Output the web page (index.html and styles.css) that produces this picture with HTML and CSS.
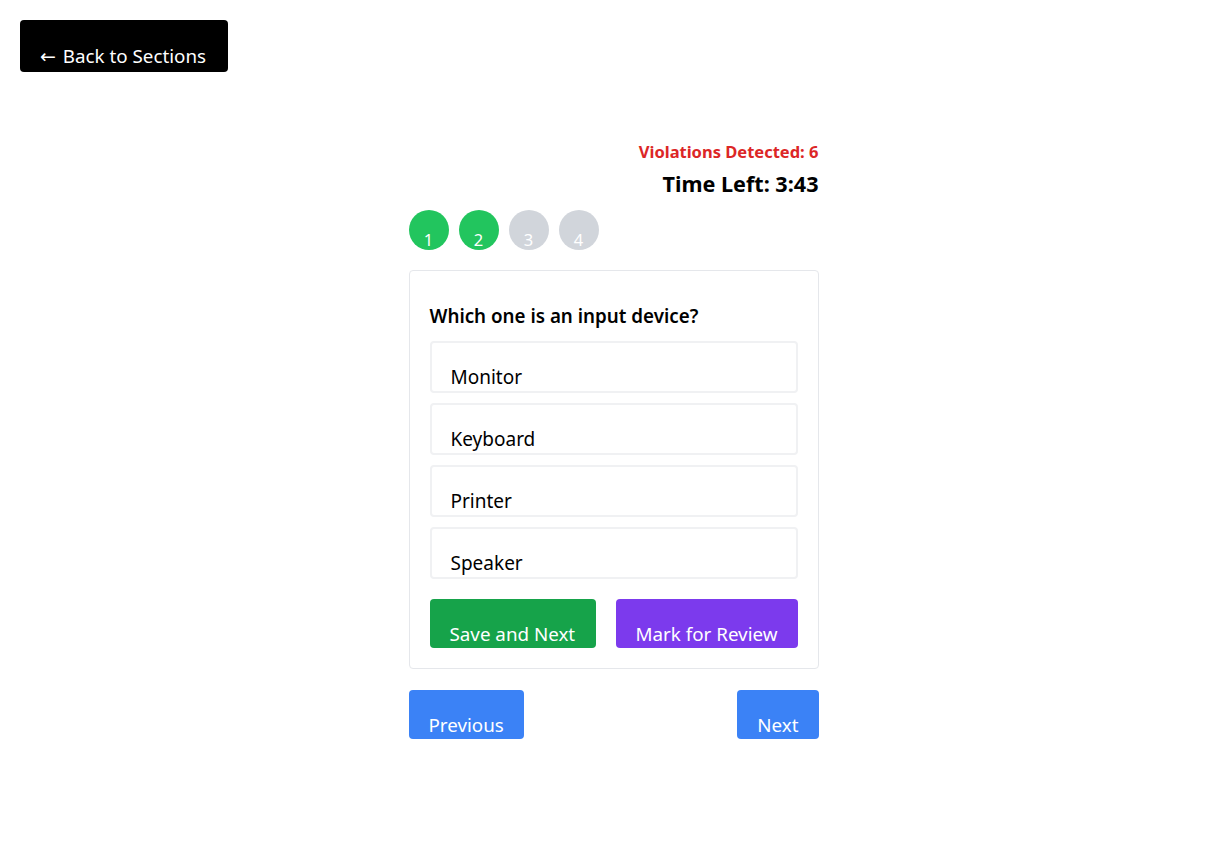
FILE: index.html
```html
<!DOCTYPE html>
<html>
<head>
<meta charset="utf-8">
<link rel="stylesheet" href="styles.css">
</head>
<body>
<div class="page">
  <button class="back-btn"><span class="arrow">←</span> Back to Sections</button>
  <main class="quiz">
    <div class="status">
      <div class="violations">Violations Detected: 6</div>
      <div class="timer">Time Left: 3:43</div>
    </div>
    <div class="steps">
      <span class="step done">1</span>
      <span class="step done">2</span>
      <span class="step">3</span>
      <span class="step">4</span>
    </div>
    <section class="card">
      <h2 class="question">Which one is an input device?</h2>
      <div class="options">
        <div class="option">Monitor</div>
        <div class="option">Keyboard</div>
        <div class="option">Printer</div>
        <div class="option">Speaker</div>
      </div>
      <div class="actions">
        <button class="btn btn-green">Save and Next</button>
        <button class="btn btn-purple">Mark for Review</button>
      </div>
    </section>
    <div class="nav">
      <button class="btn btn-blue prev">Previous</button>
      <button class="btn btn-blue next">Next</button>
    </div>
  </main>
</div>
</body>
</html>
```

FILE: styles.css
```css
* { box-sizing: border-box; }
html, body { margin: 0; padding: 0; background: #fff; }
body {
  font-family: "Noto Sans", "Open Sans", sans-serif;
  color: #000;
}
.page {
  padding: 20px;
}
button {
  font-family: inherit;
  border: none;
  cursor: pointer;
}
.back-btn {
  display: flex;
  align-items: flex-end;
  height: 52px;
  width: 208px;
  padding: 0 0 4px 20px;
  background: #000;
  color: #fff;
  font-size: 18.8px;
  border-radius: 4px;
  line-height: 24px;
  white-space: pre;
}
.arrow {
  font-family: "DejaVu Sans", sans-serif;
  font-size: 19px;
  margin-right: 2px;
}
.quiz {
  width: 410px;
  margin: 68px auto 0 auto;
}
.status {
  text-align: right;
}
.violations {
  color: #dc2626;
  font-weight: 700;
  font-size: 16.5px;
  line-height: 24px;
}
.timer {
  font-weight: 700;
  font-size: 21.6px;
  line-height: 28px;
  margin-top: 6px;
}
.steps {
  display: flex;
  gap: 10px;
  margin-top: 12px;
}
.step {
  width: 40px;
  height: 40px;
  border-radius: 50%;
  background: #d1d5db;
  color: #fff;
  font-size: 16.5px;
  display: flex;
  align-items: flex-end;
  justify-content: center;
  line-height: 20px;
}
.step.done { background: #22c55e; }
.card {
  margin-top: 20px;
  border: 1px solid #e5e7eb;
  border-radius: 4px;
  padding: 20px;
}
.question {
  margin: 12px 0 0 0;
  font-size: 18.8px;
  font-weight: 600;
  line-height: 26px;
}
.options {
  display: flex;
  flex-direction: column;
  gap: 10px;
  margin-top: 12px;
}
.option {
  height: 52px;
  border: 2px solid #f0f1f3;
  border-radius: 4px;
  padding: 0 19px 2px 19px;
  display: flex;
  align-items: flex-end;
  font-size: 19px;
  line-height: 24px;
}
.actions {
  display: flex;
  gap: 20px;
  margin-top: 20px;
}
.btn {
  height: 49px;
  border-radius: 4px;
  color: #fff;
  font-size: 18.8px;
  line-height: 24px;
  display: flex;
  align-items: flex-end;
  padding: 0 20px 2px 20px;
}
.btn-green { background: #16a34a; width: 166px; }
.btn-purple { background: #7c3aed; width: 182px; }
.btn-blue { background: #3b82f6; }
.nav {
  display: flex;
  justify-content: space-between;
  margin-top: 21px;
}
```
